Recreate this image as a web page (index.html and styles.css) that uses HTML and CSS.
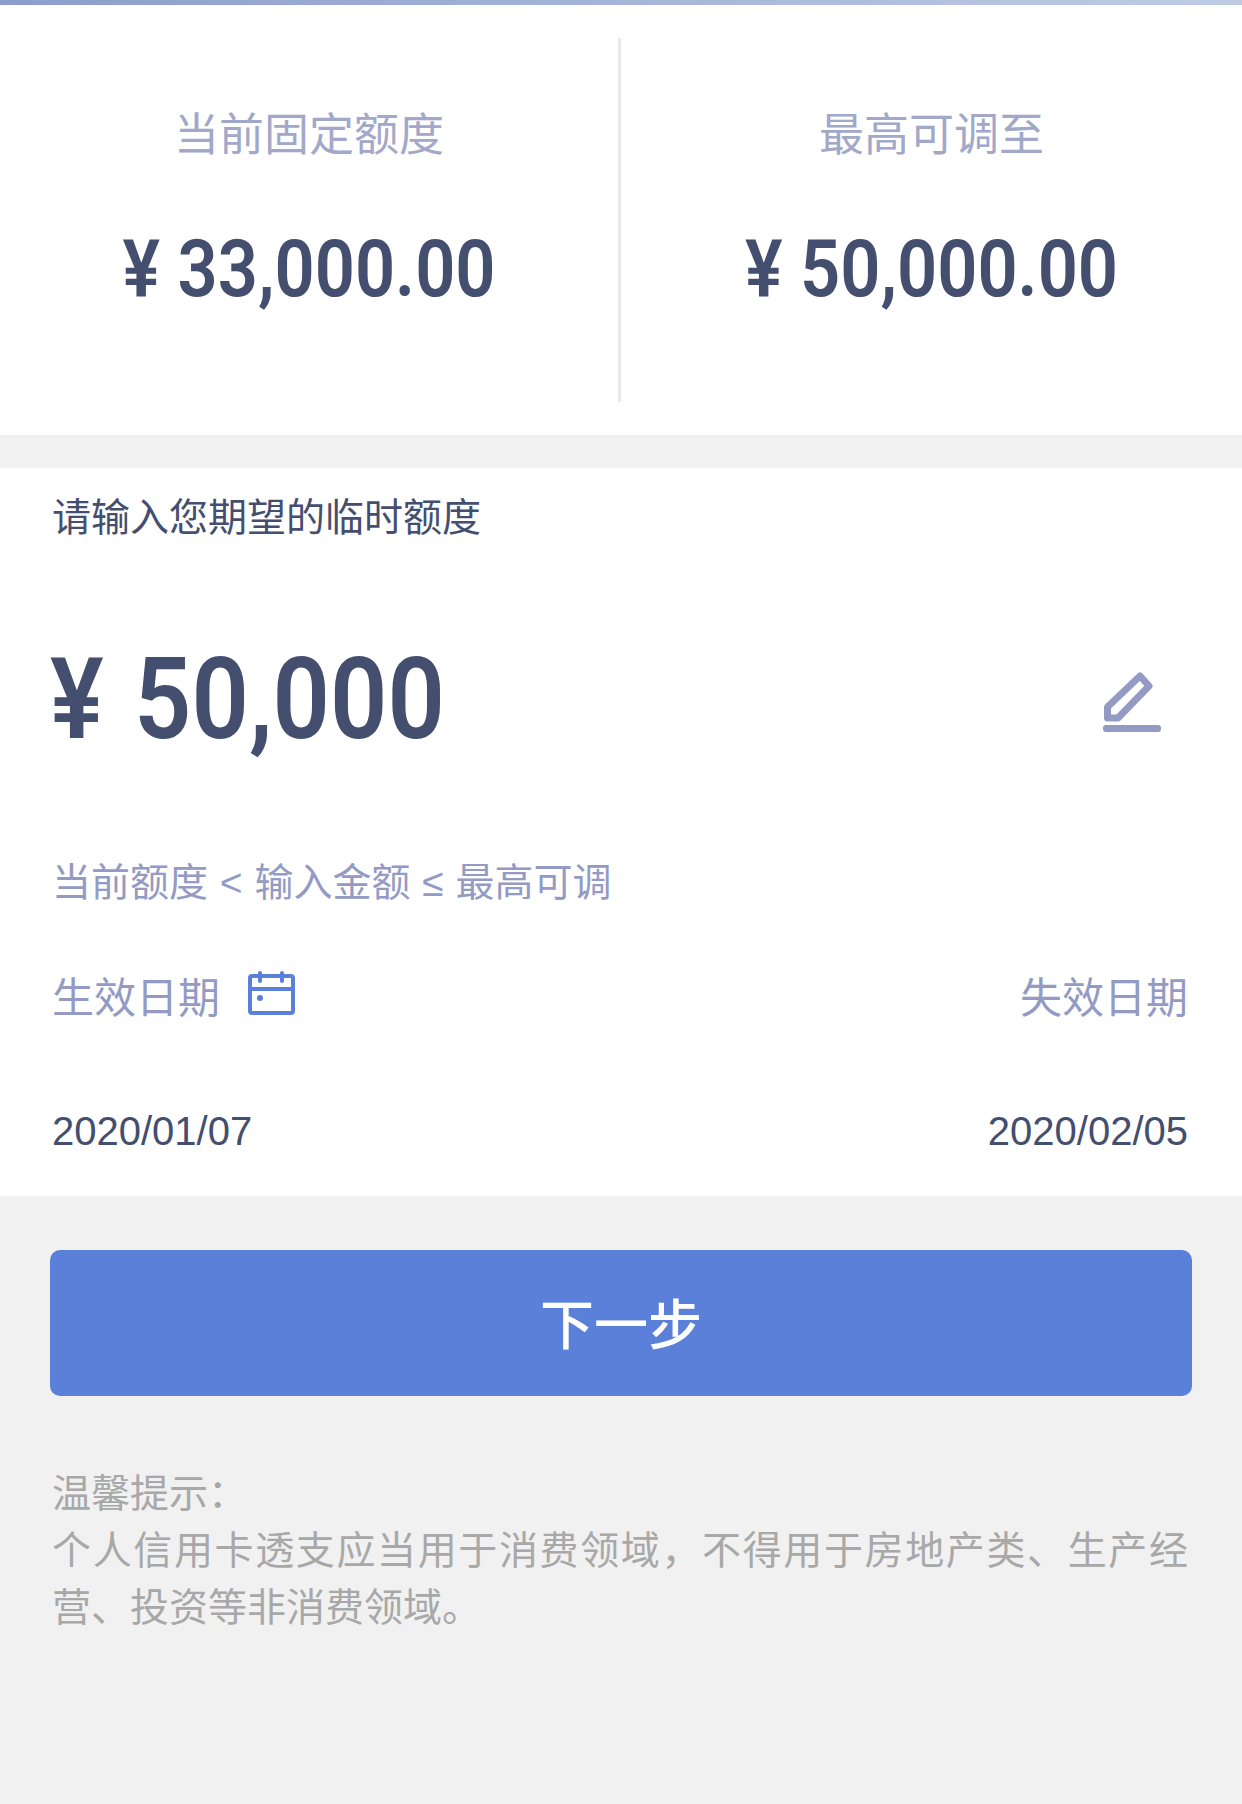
FILE: index.html
```html
<!DOCTYPE html>
<html lang="en">
<head>
    <meta charset="UTF-8">
    <meta name="viewport" content="width=device-width, initial-scale=1.0">
    <title>临时额度</title>
    <link rel="stylesheet" href="styles.css">
</head>
<body>
    <div class="top-bar"></div>
    <div class="limits">
        <div class="limit">
            <div class="limit-label">当前固定额度</div>
            <div class="limit-value">¥ 33,000.00</div>
        </div>
        <div class="limit-line"></div>
        <div class="limit">
            <div class="limit-label">最高可调至</div>
            <div class="limit-value">¥ 50,000.00</div>
        </div>
    </div>
    <div class="form">
        <div class="form-title">请输入您期望的临时额度</div>
        <div class="amount-row">
            <div class="amount">¥ 50,000</div>
            <svg class="edit-icon" width="58" height="61" viewBox="0 0 58 61">
                <path d="M4.5 36 L4.5 47 L15 47 L46 15 L37 5 Z" fill="none" stroke="#939bc4" stroke-width="7" stroke-linejoin="round"/>
                <rect x="0" y="54" width="58" height="7" rx="3" fill="#939bc4"/>
            </svg>
        </div>
        <div class="hint">当前额度 &lt; 输入金额 ≤ 最高可调</div>
        <div class="date-labels">
            <div class="date-label">生效日期
                <svg class="cal-icon" width="47" height="44" viewBox="0 0 47 44">
                    <rect x="2" y="5" width="43" height="37" rx="2" fill="none" stroke="#5b80d9" stroke-width="4"/>
                    <path d="M2 18 H45" stroke="#5b80d9" stroke-width="4"/>
                    <path d="M12 2 V10 M34 2 V10" stroke="#5b80d9" stroke-width="4" stroke-linecap="round"/>
                    <circle cx="12" cy="27" r="3" fill="#5b80d9"/>
                </svg>
            </div>
            <div class="date-label">失效日期</div>
        </div>
        <div class="dates">
            <div>2020/01/07</div>
            <div>2020/02/05</div>
        </div>
    </div>
    <div class="bottom">
        <button class="next">下一步</button>
        <div class="tips">
            温馨提示：<br>
            个人信用卡透支应当用于消费领域，不得用于房地产类、生产经营、投资等非消费领域。
        </div>
    </div>
</body>
</html>
```

FILE: styles.css
```css
body {
    margin: 0;
    background-color: #f1f1f1;
    font-family: "Liberation Sans", "Noto Sans CJK SC", sans-serif;
    color: #444e6e;
}
.top-bar {
    height: 5px;
    background: linear-gradient(to right, #8b9dcb, #c0cce6);
}
.limits {
    display: grid;
    grid-template-columns: 618px 3px 621px;
    height: 430px;
    background-color: #fff;
    margin-bottom: 33px;
}
.limit {
    padding-top: 101px;
    text-align: center;
}
.limit-line {
    height: 364px;
    margin-top: 33px;
    background-color: #e8e8e8;
}
.limit-label {
    font-size: 45px;
    line-height: 60px;
    color: #a2a8c9;
}
.limit-value {
    margin-top: 63px;
    font-family: Roboto, sans-serif;
    font-weight: 600;
    font-size: 80px;
    line-height: 80px;
    transform: scaleX(0.88);
}
.form {
    height: 728px;
    padding: 0 52px;
    background-color: #fff;
    overflow: hidden;
}
.form-title {
    margin-top: 23px;
    font-size: 39px;
    line-height: 54px;
}
.amount-row {
    display: flex;
    justify-content: space-between;
    align-items: center;
    margin-top: 92px;
    height: 120px;
}
.amount {
    margin-top: 4px;
    margin-left: -2px;
    font-family: Roboto, sans-serif;
    font-weight: 600;
    font-size: 113px;
    word-spacing: 6px;
    transform: scaleX(0.89);
    transform-origin: left center;
}
.edit-icon {
    margin-top: 9px;
    margin-right: 29px;
}
.hint {
    margin-top: 99px;
    font-size: 39px;
    line-height: 54px;
    word-spacing: 1px;
    color: #939bc4;
}
.date-labels, .dates {
    display: flex;
    justify-content: space-between;
    padding-right: 2px;
}
.date-labels {
    margin-top: 61px;
}
.date-label {
    display: flex;
    align-items: center;
    font-size: 42px;
    line-height: 56px;
    color: #939bc4;
}
.cal-icon {
    margin-left: 28px;
    margin-top: -12px;
}
.dates {
    margin-top: 81px;
    font-size: 40px;
    line-height: 46px;
}
.bottom {
    padding: 54px 50px 0;
}
.next {
    display: block;
    width: 100%;
    height: 146px;
    padding-bottom: 4px;
    border: none;
    border-radius: 10px;
    background-color: #5b80d9;
    color: #fff;
    font-family: inherit;
    font-weight: 500;
    font-size: 54px;
}
.tips {
    margin-top: 69px;
    padding: 0 4px 0 2px;
    font-size: 39px;
    line-height: 57px;
    color: #a8a8a8;
    text-align: justify;
}
```
